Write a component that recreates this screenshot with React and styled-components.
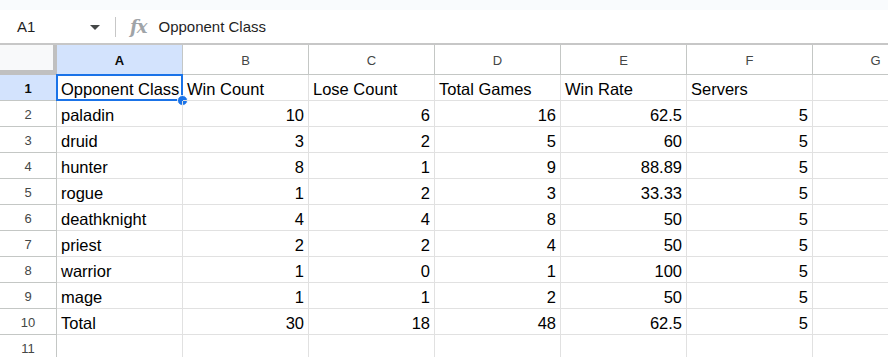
import React from "react";
import styled, { createGlobalStyle } from "styled-components";

const GlobalStyle = createGlobalStyle`
  html, body {
    margin: 0;
    padding: 0;
    background: #ffffff;
  }
  body {
    font-family: "Liberation Sans", Arial, sans-serif;
    overflow: hidden;
  }
`;

const columns = ["A", "B", "C", "D", "E", "F", "G"];

const rows = [
  ["Opponent Class", "Win Count", "Lose Count", "Total Games", "Win Rate", "Servers"],
  ["paladin", 10, 6, 16, 62.5, 5],
  ["druid", 3, 2, 5, 60, 5],
  ["hunter", 8, 1, 9, 88.89, 5],
  ["rogue", 1, 2, 3, 33.33, 5],
  ["deathknight", 4, 4, 8, 50, 5],
  ["priest", 2, 2, 4, 50, 5],
  ["warrior", 1, 0, 1, 100, 5],
  ["mage", 1, 1, 2, 50, 5],
  ["Total", 30, 18, 48, 62.5, 5],
  ["", "", "", "", "", ""],
];

export default function App() {
  return (
    <Page>
      <GlobalStyle />
      <TopStrip />
      <FormulaBar>
        <NameBox>
          <CellRef>A1</CellRef>
          <Caret />
        </NameBox>
        <Divider />
        <Fx>fx</Fx>
        <FormulaText>Opponent Class</FormulaText>
      </FormulaBar>
      <Sheet>
        <Corner />
        {columns.map((c) => (
          <ColHeader key={c} $active={c === "A"}>
            {c}
          </ColHeader>
        ))}
        {rows.map((r, i) => (
          <React.Fragment key={i}>
            <RowHeader $active={i === 0}>{i + 1}</RowHeader>
            {r.map((v, j) => (
              <Cell key={j} $num={typeof v === "number"}>
                {v}
                {i === 0 && j === 0 && (
                  <>
                    <Selection />
                    <Handle />
                  </>
                )}
              </Cell>
            ))}
            <Cell />
          </React.Fragment>
        ))}
      </Sheet>
    </Page>
  );
}

const Page = styled.div`
  width: 888px;
  height: 357px;
  overflow: hidden;
  background: #fff;
`;

const TopStrip = styled.div`
  height: 10px;
  background: #f9fbfd;
`;

const FormulaBar = styled.div`
  height: 33px;
  display: flex;
  align-items: center;
  border-bottom: 2px solid #c7c7c7;
  background: #fff;
`;

const NameBox = styled.div`
  width: 115px;
  display: flex;
  align-items: center;
  justify-content: space-between;
  padding: 0 15px 0 17px;
  box-sizing: border-box;
`;

const CellRef = styled.span`
  font-size: 15px;
  color: #1f1f1f;
`;

const Caret = styled.span`
  width: 0;
  height: 0;
  border-left: 5px solid transparent;
  border-right: 5px solid transparent;
  border-top: 5px solid #444746;
  margin-top: 2px;
`;

const Divider = styled.div`
  width: 1px;
  height: 20px;
  background: #c7c7c7;
`;

const Fx = styled.span`
  margin-left: 14px;
  padding-right: 2px;
  font-family: "DejaVu Serif", "Liberation Serif", serif;
  font-style: italic;
  font-weight: 700;
  font-size: 18px;
  line-height: 22px;
  color: #a0a4a8;
  letter-spacing: -1px;
`;

const FormulaText = styled.span`
  margin-left: 10px;
  font-size: 15px;
  color: #1f1f1f;
`;

const Sheet = styled.div`
  display: grid;
  grid-template-columns: 57px repeat(7, 126px);
  grid-template-rows: 30px;
  grid-auto-rows: 26px;
`;

const Corner = styled.div`
  background: #f8f9fa;
  border-right: 4px solid #c0c0c0;
  border-bottom: 5px solid #c0c0c0;
`;

const ColHeader = styled.div`
  display: flex;
  align-items: center;
  justify-content: center;
  font-size: 13px;
  color: ${(p) => (p.$active ? "#0b0b0b" : "#444746")};
  font-weight: ${(p) => (p.$active ? 700 : 400)};
  background: ${(p) => (p.$active ? "#d3e3fd" : "#fff")};
  border-right: 1px solid #c4c7c5;
  border-bottom: 1px solid #c4c7c5;
  padding-top: 1px;
`;

const RowHeader = styled.div`
  display: flex;
  align-items: center;
  justify-content: center;
  font-size: 13px;
  padding-top: 1px;
  color: ${(p) => (p.$active ? "#0b0b0b" : "#444746")};
  font-weight: ${(p) => (p.$active ? 700 : 400)};
  background: ${(p) => (p.$active ? "#d3e3fd" : "#fff")};
  border-right: 1px solid #c4c7c5;
  border-bottom: 1px solid #c4c7c5;
`;

const Cell = styled.div`
  position: relative;
  display: flex;
  align-items: center;
  justify-content: ${(p) => (p.$num ? "flex-end" : "flex-start")};
  padding: 3px 4px 0 4px;
  font-size: 16.5px;
  color: #000;
  white-space: nowrap;
  border-right: 1px solid #e1e1e1;
  border-bottom: 1px solid #e1e1e1;
`;

const Selection = styled.div`
  position: absolute;
  left: -1px;
  top: -1px;
  right: -1px;
  bottom: -1px;
  border: 2px solid #1a73e8;
  pointer-events: none;
`;

const Handle = styled.div`
  position: absolute;
  right: -6px;
  bottom: -6px;
  width: 9px;
  height: 9px;
  border-radius: 50%;
  background: #1a73e8;
  border: 1px solid #fff;
`;
